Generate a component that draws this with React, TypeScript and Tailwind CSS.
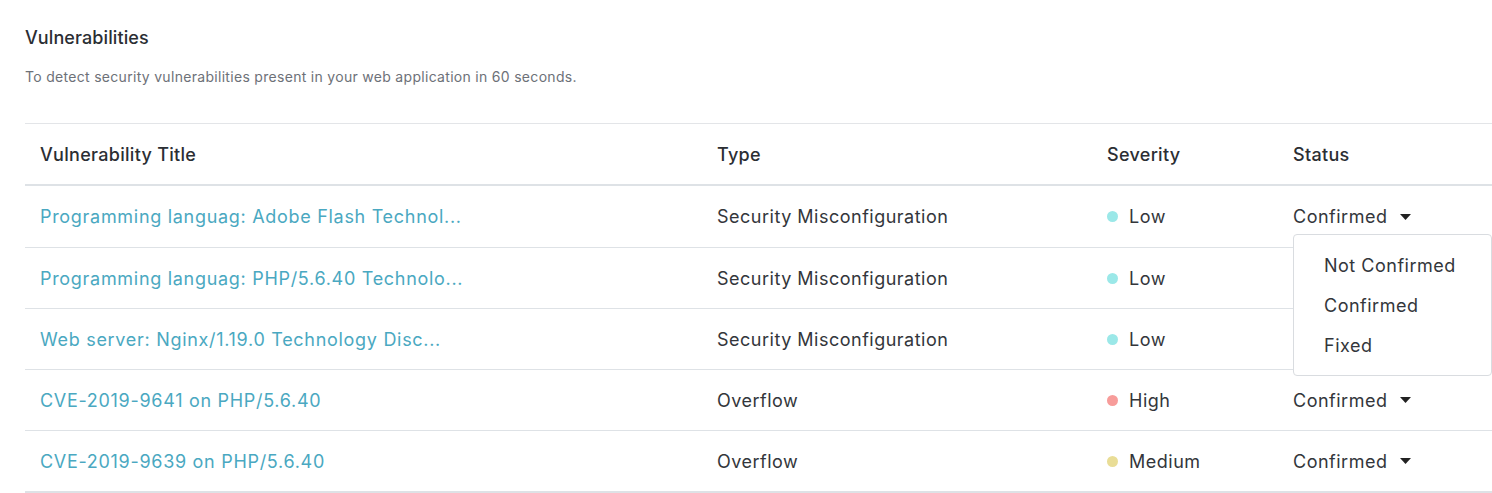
import React from "react";

type Row = { title: string; type: string; severity: "Low" | "High" | "Medium"; status: string; open?: boolean };

const rows: Row[] = [
  { title: "Programming languag: Adobe Flash Technol...", type: "Security Misconfiguration", severity: "Low", status: "Confirmed", open: true },
  { title: "Programming languag: PHP/5.6.40 Technolo...", type: "Security Misconfiguration", severity: "Low", status: "" },
  { title: "Web server: Nginx/1.19.0 Technology Disc...", type: "Security Misconfiguration", severity: "Low", status: "" },
  { title: "CVE-2019-9641 on PHP/5.6.40", type: "Overflow", severity: "High", status: "Confirmed" },
  { title: "CVE-2019-9639 on PHP/5.6.40", type: "Overflow", severity: "Medium", status: "Confirmed" },
];

function Dot({ s }: { s: Row["severity"] }) {
  if (s === "Low") return <span className="block shrink-0 w-[11px] h-[11px] rounded-full bg-[#9be8e8]" />;
  if (s === "High") return <span className="block shrink-0 w-[11px] h-[11px] rounded-full bg-[#f79c9a]" />;
  return <span className="block shrink-0 w-[11px] h-[11px] rounded-full bg-[#e9dd96]" />;
}

function Caret() {
  return (
    <svg width="11" height="6" viewBox="0 0 11 6" className="ml-[13px] shrink-0">
      <path d="M0 0 L11 0 L5.5 6 Z" fill="#222" />
    </svg>
  );
}

export default function App() {
  return (
    <div className="w-[1492px] h-[493px] bg-white overflow-hidden text-[#2b2e33]" style={{ fontFamily: "Inter, 'Noto Sans', sans-serif" }}>
      <div className="pl-[25px] pt-[27px]">
        <h2 className="text-[18px] leading-[22px] font-medium text-[#2b2e33] tracking-[0.1px]">Vulnerabilities</h2>
        <p className="mt-[19px] text-[14px] leading-[18px] text-[#6d7178] tracking-[0.3px]">To detect security vulnerabilities present in your web application in 60 seconds.</p>
        <div className="mt-[37px] border-t border-[#e3e5e8]">
          <div className="grid grid-cols-[677px_390px_186px_1fr] h-[62px] items-center border-b-2 border-[#dee2e6] text-[18px] font-medium tracking-[0.3px]">
            <div className="pl-[15px]">Vulnerability Title</div>
            <div className="pl-[15px]">Type</div>
            <div className="pl-[15px]">Severity</div>
            <div className="pl-[15px]">Status</div>
          </div>
          {rows.map((r, i) => (
            <div
              key={i}
              className={
                "grid grid-cols-[677px_390px_186px_1fr] items-center text-[18px] tracking-[0.5px] " +
                (i === rows.length - 1
                  ? "h-[62px] border-b-2 border-[#dee2e6]"
                  : i === 0
                  ? "h-[62px] border-b border-[#dee2e6]"
                  : "h-[61px] border-b border-[#dee2e6]")
              }
            >
              <div className="pl-[15px] text-[#4aa8c1] tracking-[0.7px]">{r.title}</div>
              <div className="pl-[15px] text-[#33363b]">{r.type}</div>
              <div className="pl-[15px] flex items-center gap-[11px] text-[#33363b]">
                <Dot s={r.severity} />
                <span>{r.severity}</span>
              </div>
              <div className="pl-[15px] relative">
                {r.status && (
                  <div className="flex items-center text-[#33363b]">
                    <span>{r.status}</span>
                    <Caret />
                  </div>
                )}
                {r.open && (
                  <div className="absolute left-[15px] top-[31px] z-10 w-[199px] rounded-[4px] border border-[#d9dce0] bg-white py-[10px]">
                    <div className="h-[40px] flex items-center pl-[30px] text-[#33363b]">Not Confirmed</div>
                    <div className="h-[40px] flex items-center pl-[30px] text-[#33363b]">Confirmed</div>
                    <div className="h-[40px] flex items-center pl-[30px] text-[#33363b]">Fixed</div>
                  </div>
                )}
              </div>
            </div>
          ))}
        </div>
      </div>
    </div>
  );
}
